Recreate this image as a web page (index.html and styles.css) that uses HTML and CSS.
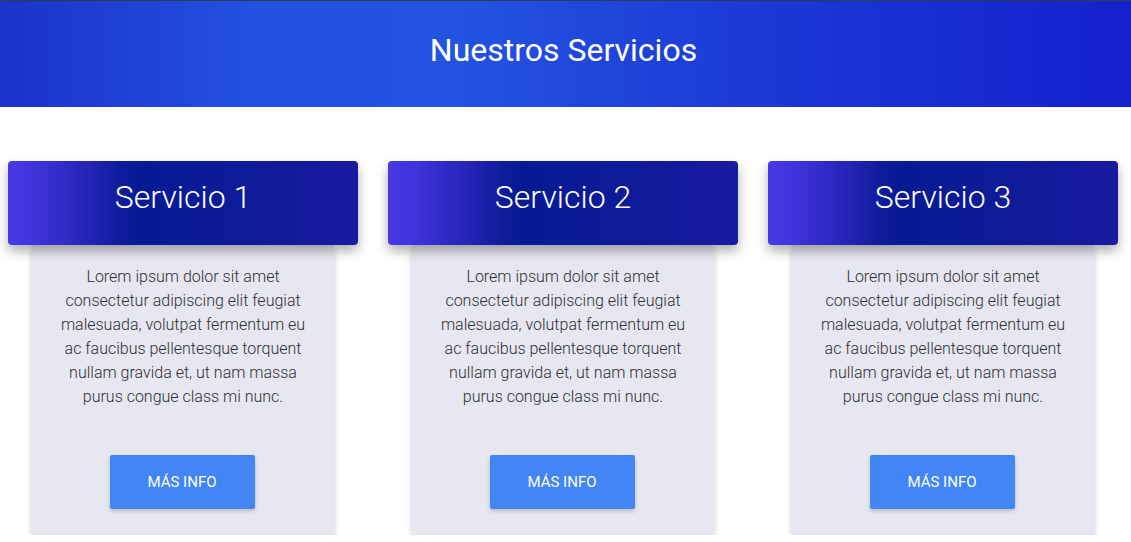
FILE: index.html
```html
<!DOCTYPE html>
<html lang="es">
<head>
<meta charset="utf-8">
<title>Nuestros Servicios</title>
<link rel="stylesheet" href="styles.css">
</head>
<body>
<header class="banner">
  <h1 class="banner-title">Nuestros Servicios</h1>
</header>
<main class="services">
  <article class="card">
    <div class="card-head"><h2 class="card-title">Servicio 1</h2></div>
    <div class="card-body">
      <p class="card-text">Lorem ipsum dolor sit amet consectetur adipiscing elit feugiat malesuada, volutpat fermentum eu ac faucibus pellentesque torquent nullam gravida et, ut nam massa purus congue class mi nunc.</p>
      <a class="btn" href="#">Más info</a>
    </div>
  </article>
  <article class="card">
    <div class="card-head"><h2 class="card-title">Servicio 2</h2></div>
    <div class="card-body">
      <p class="card-text">Lorem ipsum dolor sit amet consectetur adipiscing elit feugiat malesuada, volutpat fermentum eu ac faucibus pellentesque torquent nullam gravida et, ut nam massa purus congue class mi nunc.</p>
      <a class="btn" href="#">Más info</a>
    </div>
  </article>
  <article class="card">
    <div class="card-head"><h2 class="card-title">Servicio 3</h2></div>
    <div class="card-body">
      <p class="card-text">Lorem ipsum dolor sit amet consectetur adipiscing elit feugiat malesuada, volutpat fermentum eu ac faucibus pellentesque torquent nullam gravida et, ut nam massa purus congue class mi nunc.</p>
      <a class="btn" href="#">Más info</a>
    </div>
  </article>
</main>
</body>
</html>
```
FILE: styles.css
```css
* { box-sizing: border-box; }

body {
  margin: 0;
  font-family: Roboto, "Liberation Sans", sans-serif;
  background: #ffffff;
  color: #333333;
}

.banner {
  height: 107px;
  border-top: 1px solid #2b3a55;
  background: linear-gradient(90deg, #1b33c9 0%, #2250df 22%, #2353e0 40%, #1c3bd6 65%, #1421cc 100%);
  display: flex;
  align-items: center;
  justify-content: center;
}

.banner-title {
  margin: 0;
  color: #ffffff;
  font-size: 32px;
  font-weight: 400;
  padding-bottom: 8px;
  padding-right: 4px;
}

.services {
  display: flex;
  gap: 30px;
  padding: 54px 8px 0;
}

.card {
  width: 350px;
  display: flex;
  flex-direction: column;
  align-items: center;
}

.card-head {
  position: relative;
  z-index: 1;
  width: 100%;
  height: 84px;
  border-radius: 4px;
  background: linear-gradient(90deg, #4838e3 0%, #3f33db 8%, #2a27bd 20%, #0e1c9a 33%, #061a94 38%, #0c1b98 62%, #191aa0 100%);
  box-shadow: 0 6px 12px rgba(0, 0, 0, 0.32);
  display: flex;
  align-items: center;
  justify-content: center;
}

.card-title {
  margin: 0;
  color: #ffffff;
  font-size: 32px;
  font-weight: 300;
  padding-bottom: 12px;
}

.card-body {
  width: 302px;
  background: #e7e7f1;
  border-radius: 0 0 4px 4px;
  box-shadow: 0 2px 6px rgba(0, 0, 0, 0.22);
  padding: 20px 24px 26px;
  display: flex;
  flex-direction: column;
  align-items: center;
}

.card-text {
  margin: 0 0 46px;
  font-size: 16px;
  font-weight: 300;
  line-height: 24px;
  text-align: center;
  color: #2e2e33;
}

.btn {
  width: 145px;
  height: 54px;
  margin-right: 2px;
  background: #4285f4;
  color: #ffffff;
  border-radius: 2px;
  box-shadow: 0 2px 4px rgba(0, 0, 0, 0.2);
  text-decoration: none;
  text-transform: uppercase;
  font-size: 15px;
  font-weight: 400;
  display: flex;
  align-items: center;
  justify-content: center;
}
```
